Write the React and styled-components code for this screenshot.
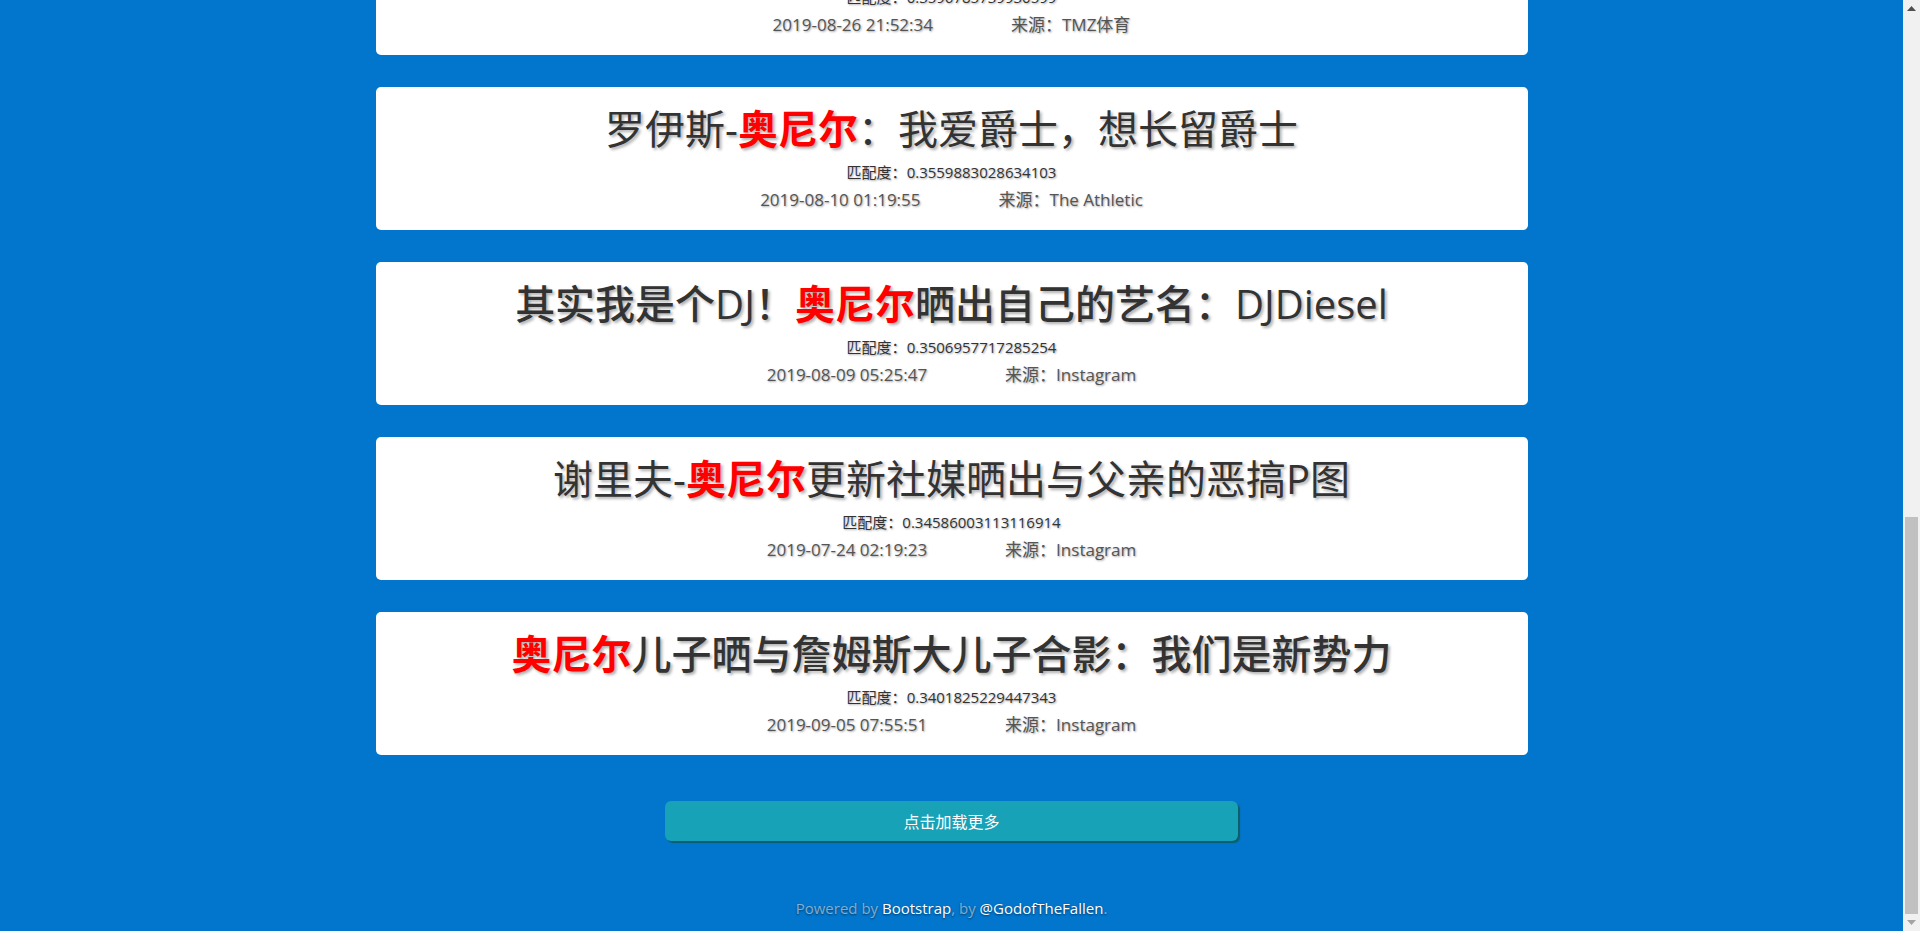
import React from 'react';
import styled, { createGlobalStyle } from 'styled-components';

const GlobalStyle = createGlobalStyle`
    html, body {
        margin: 0;
        padding: 0;
        height: 100%;
        overflow: hidden;
    }
    body {
        font-family: 'Open Sans', 'Noto Sans CJK SC', sans-serif;
        background: #0275cc;
    }
`;

const results = [
    {
        title: [{ t: '詹姆斯晒出与' }, { t: '奥尼尔', hit: true }, { t: '的合影' }],
        score: '0.3596785739930599',
        time: '2019-08-26 21:52:34',
        source: 'TMZ体育',
    },
    {
        title: [{ t: '罗伊斯-' }, { t: '奥尼尔', hit: true }, { t: '：我爱爵士，想长留爵士' }],
        score: '0.3559883028634103',
        time: '2019-08-10 01:19:55',
        source: 'The Athletic',
    },
    {
        title: [{ t: '其实我是个DJ！' }, { t: '奥尼尔', hit: true }, { t: '晒出自己的艺名：DJDiesel' }],
        score: '0.3506957717285254',
        time: '2019-08-09 05:25:47',
        source: 'Instagram',
        heavy: true,
    },
    {
        title: [{ t: '谢里夫-' }, { t: '奥尼尔', hit: true }, { t: '更新社媒晒出与父亲的恶搞P图' }],
        score: '0.34586003113116914',
        time: '2019-07-24 02:19:23',
        source: 'Instagram',
    },
    {
        title: [{ t: '奥尼尔', hit: true }, { t: '儿子晒与詹姆斯大儿子合影：我们是新势力' }],
        score: '0.3401825229447343',
        time: '2019-09-05 07:55:51',
        source: 'Instagram',
        heavy: true,
    },
];

const App = () => {
    return (
        <>
            <GlobalStyle />
            <Window>
                <Page>
                    {/* Result list, scrolled to the bottom */}
                    <Feed>
                        {results.map((r, i) => (
                            <Card key={i}>
                                <Title $heavy={r.heavy}>
                                    {r.title.map((p, j) =>
                                        p.hit ? <Hit key={j}>{p.t}</Hit> : <span key={j}>{p.t}</span>
                                    )}
                                </Title>
                                <Score>匹配度：{r.score}</Score>
                                <Meta>
                                    <span>{r.time}</span>
                                    <span>来源：{r.source}</span>
                                </Meta>
                            </Card>
                        ))}
                    </Feed>

                    <LoadMore>点击加载更多</LoadMore>

                    <Footer>
                        Powered by <FooterLink>Bootstrap</FooterLink>, by <FooterLink>@GodofTheFallen</FooterLink>.
                    </Footer>
                </Page>

                {/* Browser scrollbar */}
                <ScrollBar>
                    <ArrowBtn>
                        <svg width="9" height="5" viewBox="0 0 9 5">
                            <path d="M0 5 L4.5 0 L9 5 Z" fill="#505050" />
                        </svg>
                    </ArrowBtn>
                    <Track>
                        <Thumb />
                    </Track>
                    <ArrowBtn>
                        <svg width="9" height="5" viewBox="0 0 9 5">
                            <path d="M0 0 L9 0 L4.5 5 Z" fill="#a3a3a3" />
                        </svg>
                    </ArrowBtn>
                </ScrollBar>
            </Window>
        </>
    );
};

const Window = styled.div`
    display: flex;
    width: 100vw;
    height: 931px;
    overflow: hidden;
`;

const Page = styled.div`
    flex: 1;
    display: flex;
    flex-direction: column;
    align-items: center;
    background: #0275cc;
    overflow: hidden;
`;

const Feed = styled.div`
    width: 1152px;
    margin-top: -88px;
    display: flex;
    flex-direction: column;
    gap: 32px;
`;

const Card = styled.div`
    background: #fff;
    border-radius: 5px;
    padding: 18px 0 17px;
    text-align: center;
    color: #333;
    text-shadow: 1px 1px 2px rgba(0, 0, 0, 0.35);
`;

const Title = styled.h1`
    margin: 0 0 8px;
    font-size: 40px;
    line-height: 48px;
    font-weight: ${props => (props.$heavy ? 500 : 400)};
    color: #333;
    text-shadow: 2px 2px 3px rgba(0, 0, 0, 0.32);
`;

const Hit = styled.b`
    color: #ff0000;
    font-weight: 700;
`;

const Score = styled.div`
    font-size: 15px;
    line-height: 22px;
    margin-bottom: 4px;
    color: #333;
`;

const Meta = styled.div`
    display: flex;
    justify-content: center;
    gap: 78px;
    font-size: 17px;
    line-height: 26px;
    color: #555;
`;

const LoadMore = styled.button`
    margin-top: 46px;
    width: 573px;
    height: 40px;
    border: none;
    border-radius: 6px;
    background: #17a2b8;
    color: #fff;
    font-family: 'Open Sans', 'Noto Sans CJK SC', sans-serif;
    font-size: 16px;
    box-shadow: 2px 2px 1px #0b5f6d;
    cursor: pointer;
`;

const Footer = styled.div`
    margin-top: 55px;
    font-size: 15px;
    line-height: 24px;
    color: rgba(255, 255, 255, 0.5);
    text-shadow: 0 1px 2px rgba(0, 0, 0, 0.5);
`;

const FooterLink = styled.a`
    color: #fff;
    text-decoration: none;
`;

const ScrollBar = styled.div`
    width: 17px;
    flex-shrink: 0;
    display: flex;
    flex-direction: column;
    background: #f1f1f1;
`;

const ArrowBtn = styled.div`
    height: 17px;
    display: flex;
    align-items: center;
    justify-content: center;
`;

const Track = styled.div`
    flex: 1;
    display: flex;
    flex-direction: column;
    justify-content: flex-end;
    align-items: center;
`;

const Thumb = styled.div`
    width: 13px;
    height: 397px;
    background: #c1c1c1;
`;

export default App;
